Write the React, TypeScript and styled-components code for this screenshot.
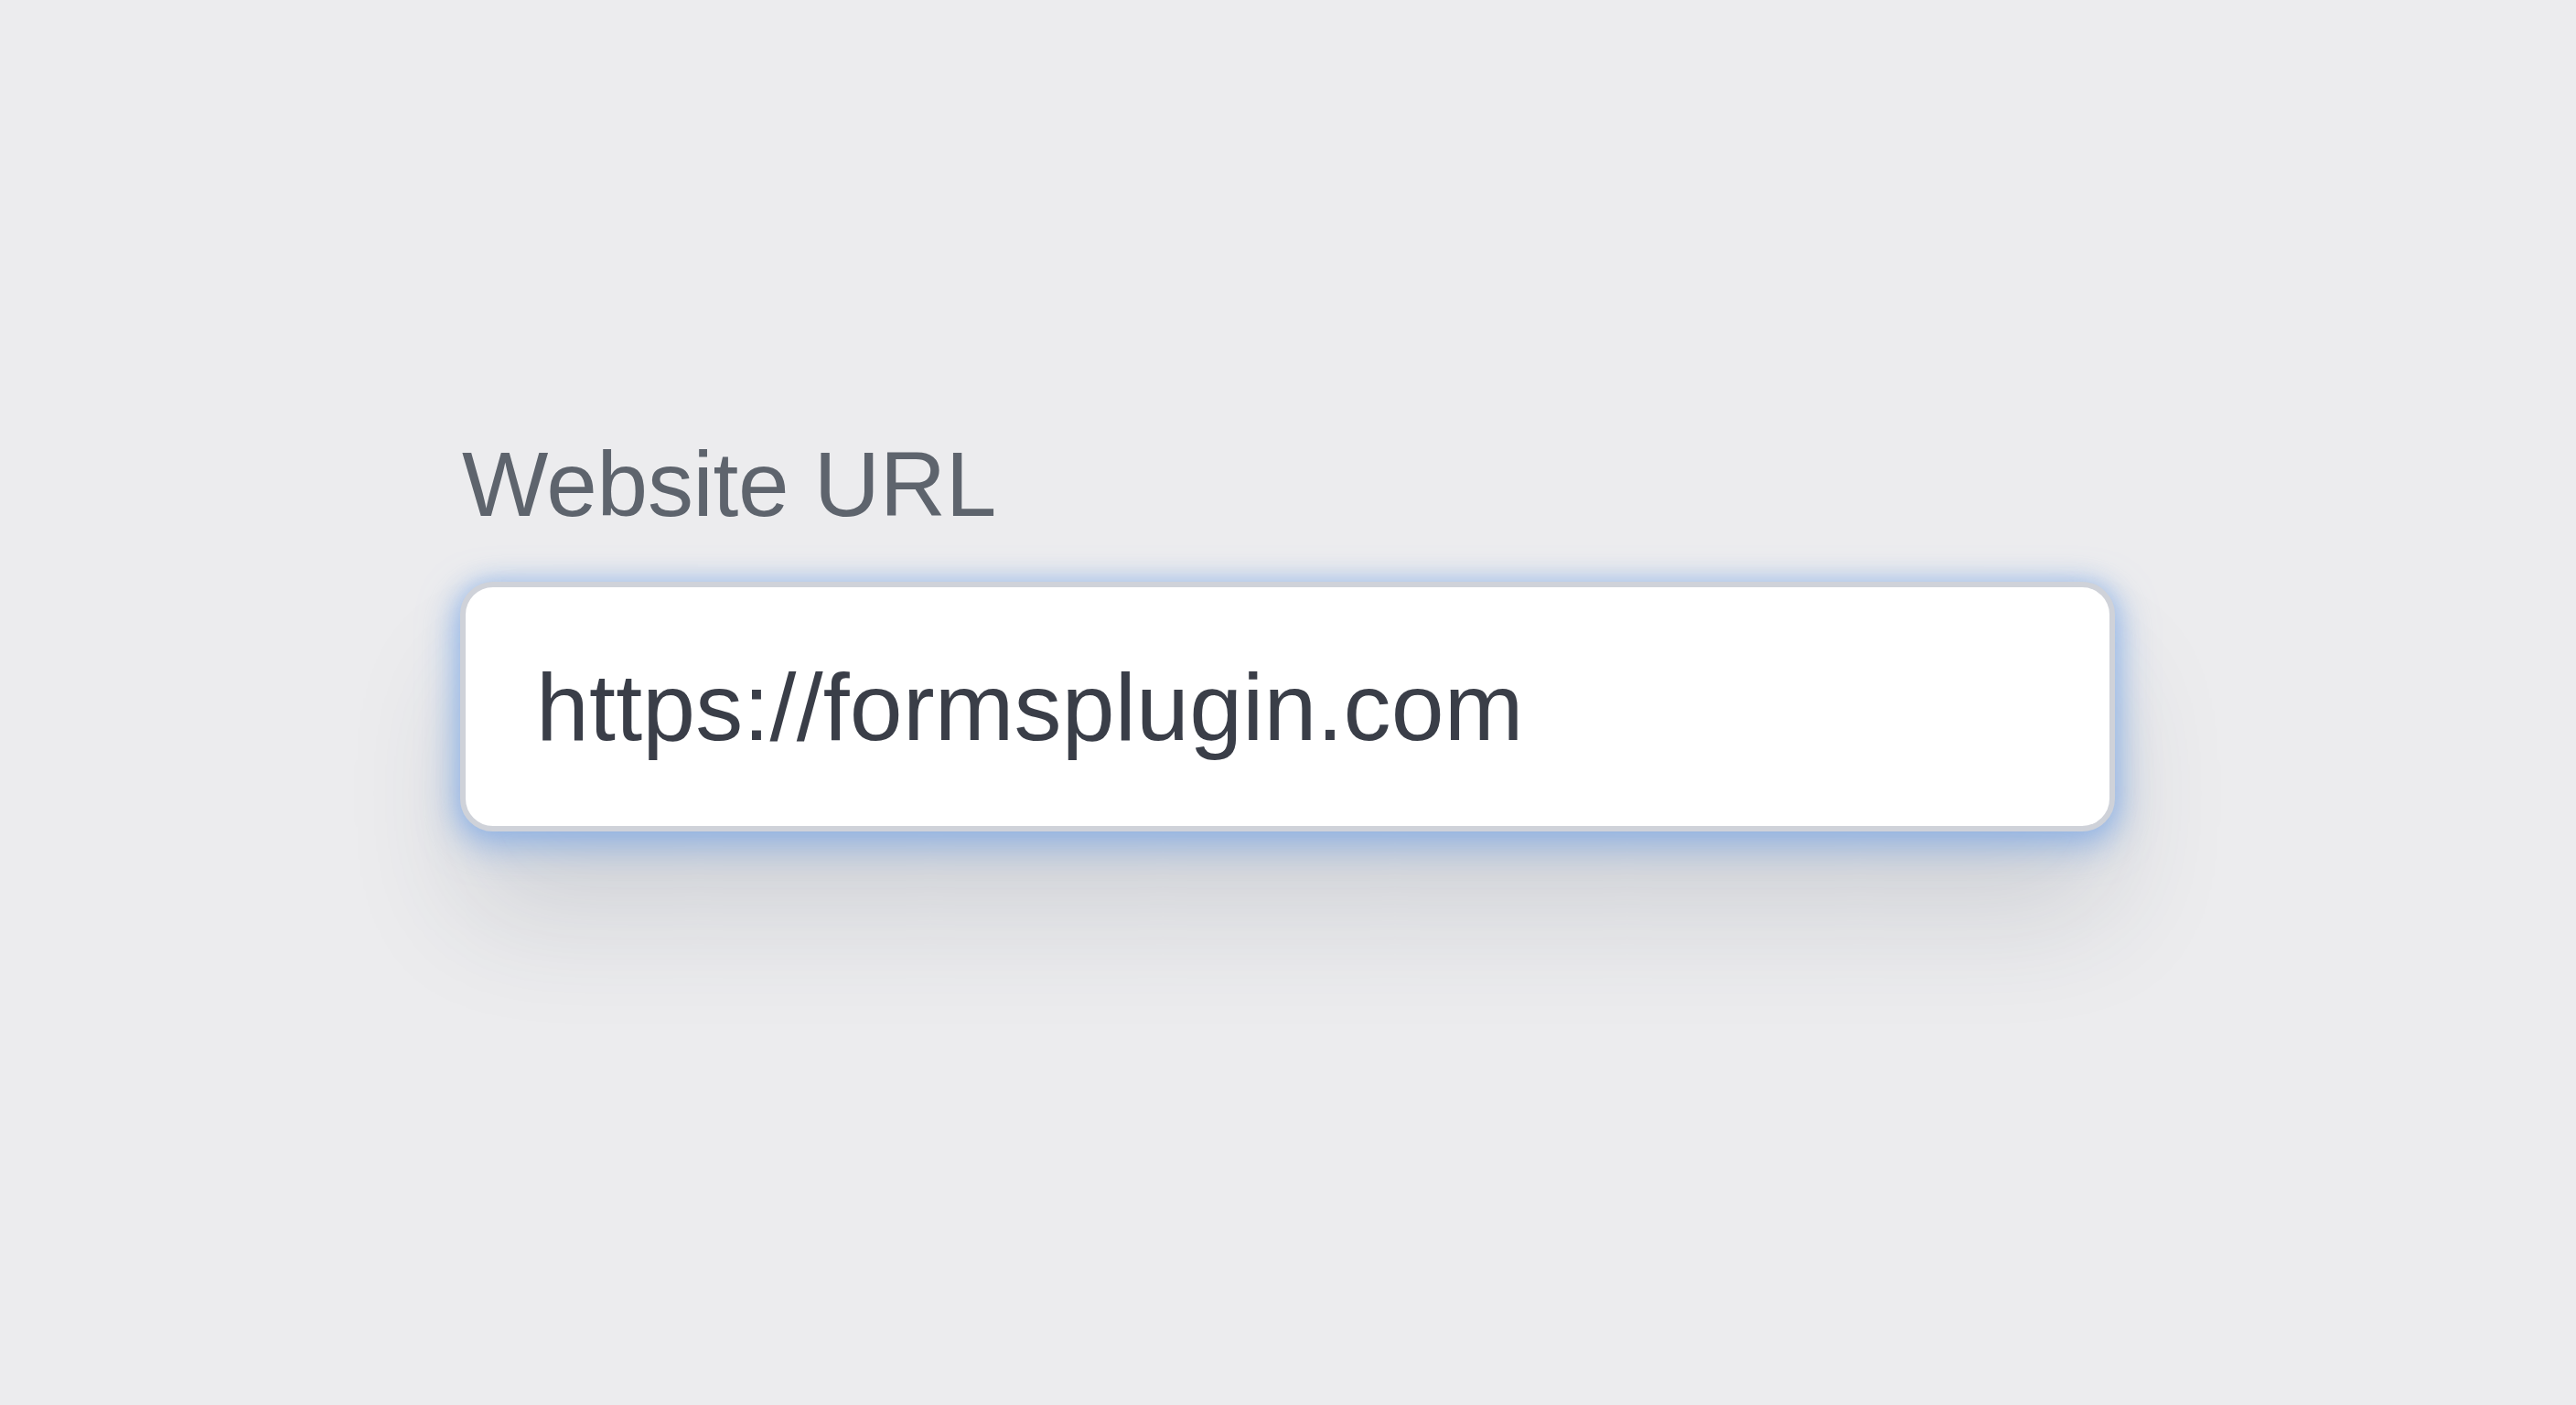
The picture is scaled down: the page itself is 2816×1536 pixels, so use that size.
import styled, { createGlobalStyle } from "styled-components";

const GlobalStyle = createGlobalStyle`
  html, body {
    margin: 0;
    padding: 0;
    background: #ececee;
  }
  body {
    font-family: "Liberation Sans", Arial, sans-serif;
  }
`;

const Page = styled.div`
  min-height: 1536px;
  box-sizing: border-box;
  padding: 479px 0 0 503px;
  background: #ececee;
`;

const Field = styled.div`
  display: flex;
  flex-direction: column;
  gap: 57px;
  width: 1809px;
`;

const Label = styled.label`
  display: block;
  margin-left: 2px;
  font-size: 100px;
  line-height: 1;
  color: #5e646d;
  letter-spacing: -0.3px;
`;

const InputBox = styled.div`
  box-sizing: border-box;
  height: 273px;
  display: flex;
  align-items: center;
  padding: 0 0 0 77px;
  background: #ffffff;
  border: 6px solid #cfd2d9;
  border-radius: 36px;
  box-shadow:
    0 12px 38px 6px rgba(118, 164, 228, 0.6),
    0 0 22px 2px rgba(140, 180, 235, 0.45),
    0 95px 130px -6px rgba(50, 60, 80, 0.15);
`;

const Value = styled.span`
  font-size: 104px;
  line-height: 1;
  color: #3a3e48;
  letter-spacing: 0.2px;
`;

export default function App() {
  return (
    <>
      <GlobalStyle />
      <Page>
        <Field>
          <Label>Website URL</Label>
          <InputBox>
            <Value>https://formsplugin.com</Value>
          </InputBox>
        </Field>
      </Page>
    </>
  );
}
